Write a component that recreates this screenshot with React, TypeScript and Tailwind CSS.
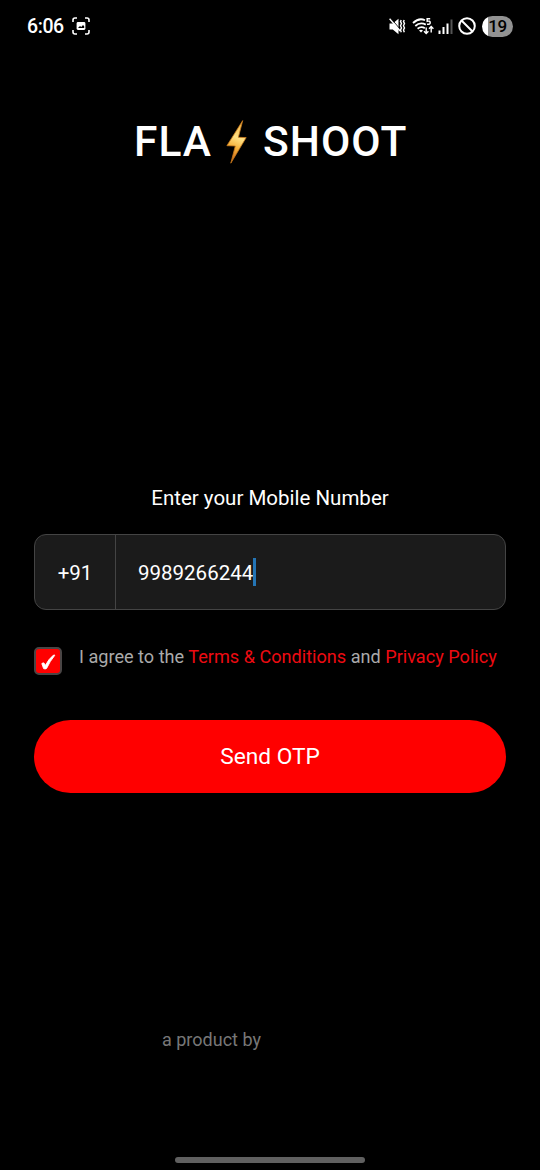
function StatusBar() {
  return (
    <header className="flex h-[52px] items-center pl-[27px] pr-[27px]">
      <span className="w-[45px] whitespace-nowrap pt-[2px] text-[19.5px] font-medium leading-none tracking-[-0.4px]">6:06</span>
      <svg className="h-[18px] w-[18px]" viewBox="0 0 18 18" fill="none" stroke="#fff" strokeWidth="1.6">
        <path d="M1 5V3q0-2 2-2h2M13 1h2q2 0 2 2v2M17 13v2q0 2-2 2h-2M5 17H3q-2 0-2-2v-2" />
        <rect x="4.6" y="5" width="8.8" height="8" rx="1.4" fill="#fff" stroke="none" />
        <path d="M6 11l2-2 1.3 1 1.7-2 1.2 1.2V11z" fill="#000" stroke="none" />
      </svg>
      <div className="ml-auto flex items-center">
        <svg className="h-[17px] w-[17px]" viewBox="0 0 17 17" fill="none">
          <path d="M.5 5.5h3.3L9.5.8v15.4l-5.7-4.7H.5z" fill="#fff" />
          <path d="M1.8.4l9 10.4" stroke="#000" strokeWidth="1" />
          <path d="M.6.8l10.6 12.2" stroke="#fff" strokeWidth="1.4" />
          <path d="M12.2 2l-.7 1.6 1 2-1 2.2 1 2.1-1 2.1.8 2.2M15.2 2l-.7 1.6 1 2-1 2.2 1 2.1-1 2.1.8 2.2" stroke="#fff" strokeWidth="1.4" />
        </svg>
        <svg className="ml-[6px] h-[18px] w-[22px]" viewBox="0 0 22 18" fill="none" stroke="#fff">
          <path d="M1 6Q7 .3 13 3.2M3.3 9Q8 4.6 13.8 7.6M5.6 11.8q3.7-3 7.2-.5" strokeWidth="1.8" />
          <path d="M7 13.4q2-1.4 4 0l-2 2z" fill="#fff" stroke="none" />
          <path d="M18.2 1.8h-3v2.5q3-.7 3 1.4 0 2-3.2 1.5" strokeWidth="1.5" />
          <path d="M14.2 10.5v6M12 14.2l2.2 2.2 2.2-2.2M19.2 15.5v-6M17 11.7l2.2-2.2 2.2 2.2" strokeWidth="1.4" />
        </svg>
        <svg className="ml-[4px] h-[15px] w-[15px]" viewBox="0 0 15 15">
          <path d="M.5 11.5h2V15h-2zM4.5 8h2v7h-2zM8.5 4.5h2V15h-2z" fill="#fff" />
          <path d="M12.5.5h2V15h-2z" fill="#555" />
        </svg>
        <svg className="ml-[5px] h-[18px] w-[18px]" viewBox="0 0 18 18" fill="none" stroke="#fff" strokeWidth="2">
          <circle cx="9" cy="9" r="7.8" />
          <path d="M3.5 3.5l11 11" />
        </svg>
        <div className="ml-[6px] flex h-[21px] w-[31px] items-center justify-center rounded-full bg-linear-to-r from-white from-18% to-[#929292] to-18%">
          <span className="text-[17px] font-medium leading-none tracking-[-0.4px] text-black">19</span>
        </div>
      </div>
    </header>
  );
}

function Bolt() {
  return (
    <svg className="ml-[11px] h-[44px] w-[21px]" viewBox="0 0 21 44">
      <defs>
        <linearGradient id="bolt" x1="0.6" y1="0" x2="0.4" y2="1">
          <stop offset="0" stopColor="#f5b544" />
          <stop offset="0.4" stopColor="#ffe083" />
          <stop offset="0.65" stopColor="#f5b13a" />
          <stop offset="1" stopColor="#c95f15" />
        </linearGradient>
      </defs>
      <path d="M16.7.6L.9 25.7l8.4.3-4.5 17.2L20.2 17.6l-7.8-.3z" fill="url(#bolt)" stroke="#c8791c" strokeWidth="0.8" strokeLinejoin="round" />
    </svg>
  );
}

export default function App() {
  return (
    <div className="flex h-[1170px] w-[540px] flex-col overflow-hidden bg-black font-['Roboto',sans-serif] text-white">
      <StatusBar />
      <h1 className="mt-[65px] flex h-[50px] items-center pl-[134px] text-[42.5px] font-medium leading-[50px] tracking-[1px]">
        <span className="w-[81px] pb-px">FLA</span>
        <Bolt />
        <span className="ml-[16px] pb-px">SHOOT</span>
      </h1>
      <main className="mt-[317px] flex flex-col px-[34px]">
        <label htmlFor="mobile" className="pt-px text-center text-[20.5px] leading-[27px]">Enter your Mobile Number</label>
        <div className="mt-[22px] flex h-[76px] overflow-hidden rounded-[12px] border-[1.5px] border-[#444] bg-[#1b1b1b] text-[20.5px]">
          <div className="flex w-[81px] items-center justify-center border-r-[1.5px] border-[#444] pt-[2px]">+91</div>
          <div id="mobile" className="flex items-center pl-[22px]">
            <span className="pt-[2px]">9989266244</span>
            <span className="h-[28px] w-[3px] bg-[#2475b5]" />
          </div>
        </div>
        <div className="mt-[36px] flex h-[30px] items-start">
          <span className="mt-[1px] flex h-[28px] w-[28px] items-center justify-center rounded-[5px] border-[2px] border-[#4a4545] bg-[#ff0000]">
            <svg className="mt-[2px] h-[18px] w-[16px]" viewBox="0 0 16 18" fill="#fff" stroke="#fff" strokeWidth="0.9">
              <path d="M1.8 10.6q1.5-1.5 2.8.1l.7 1.9Q8.7 5.8 13.6 2q.8-.3 1.2.3Q9.8 8.4 6.6 15.4q-1.4 1-3 .2z" />
            </svg>
          </span>
          <p className="ml-[17px] whitespace-nowrap text-[18.12px] leading-[22px] text-[#aaaaaa]">
            I agree to the <a className="text-[#ed0b12]">Terms &amp; Conditions</a> and <a className="text-[#ed0b12]">Privacy Policy</a>
          </p>
        </div>
        <button type="button" className="mt-[44px] h-[73px] rounded-full bg-[#ff0000] pt-[2px] text-[22.7px]">Send OTP</button>
      </main>
      <footer className="mt-auto flex h-[141px] flex-col pl-[162px]">
        <span className="text-[18px] leading-[22px] text-[#777777]">a product by</span>
        <span className="mb-[7px] ml-[13px] mt-auto h-[6px] w-[190px] rounded-full bg-[#606060]" />
      </footer>
    </div>
  );
}
